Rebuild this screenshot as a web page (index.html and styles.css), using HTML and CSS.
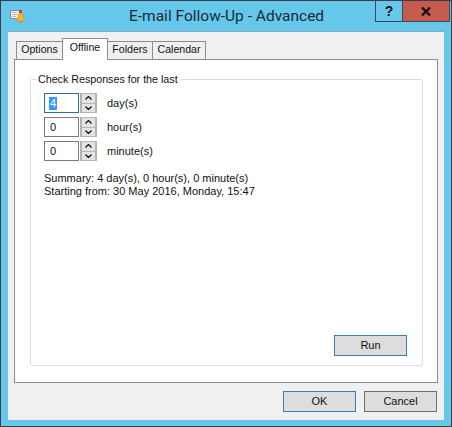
FILE: index.html
```html
<!DOCTYPE html>
<html lang="en">
<head>
<meta charset="utf-8">
<title>E-mail Follow-Up - Advanced</title>
<link rel="stylesheet" href="styles.css">
</head>
<body>
<div class="window">
  <header class="titlebar">
    <svg class="appicon" width="16" height="16" viewBox="0 0 16 16">
      <rect x="0.5" y="1.5" width="11" height="8" fill="#f4f4f8" stroke="#8b8b98"/>
      <path d="M2 3.500h5M2 5.500h5M2 7.500h4" stroke="#b9b9c6"/>
      <rect x="9" y="1" width="3" height="3" fill="#e03030"/>
      <path d="M10.500 4c-2 0-2.500 1.500-2.500 3.500 0 1.500-1 2.500-1.500 3v1.500h8v-1.500c-.5-.5-1.500-1.500-1.500-3 0-2-.5-3.500-2.500-3.500z" fill="#f2b630" stroke="#c98a18" stroke-width=".6"/>
      <rect x="9.500" y="12.500" width="2" height="1.500" fill="#c98a18"/>
    </svg>
    <h1 class="title">E-mail Follow-Up - Advanced</h1>
    <div class="caption">
      <span class="cap-btn help">?</span>
      <span class="cap-btn close">
        <svg width="10" height="9" viewBox="0 0 10 9"><path d="M1 .5l8 8M9 .5l-8 8" stroke="#111" stroke-width="2.200" fill="none"/></svg>
      </span>
    </div>
  </header>
  <main class="client">
    <nav class="tabs">
      <span class="tab tab-options">Options</span>
      <span class="tab tab-active">Offline</span>
      <span class="tab tab-folders">Folders</span>
      <span class="tab tab-calendar">Calendar</span>
    </nav>
    <section class="panel">
      <fieldset class="group">
        <legend class="legend">Check Responses for the last</legend>
        <div class="spin-row">
          <div class="input focus"><span class="sel">4</span></div>
          <div class="updown"><span class="arrow"><svg width="7" height="4" viewBox="0 0 7 4"><path d="M.5 3.500l3-3 3 3" stroke="#111" stroke-width="1.300" fill="none"/></svg></span><span class="arrow"><svg width="7" height="4" viewBox="0 0 7 4"><path d="M.5 .5l3 3 3-3" stroke="#111" stroke-width="1.300" fill="none"/></svg></span></div>
          <span class="unit">day(s)</span>
        </div>
        <div class="spin-row">
          <div class="input">0</div>
          <div class="updown"><span class="arrow"><svg width="7" height="4" viewBox="0 0 7 4"><path d="M.5 3.500l3-3 3 3" stroke="#111" stroke-width="1.300" fill="none"/></svg></span><span class="arrow"><svg width="7" height="4" viewBox="0 0 7 4"><path d="M.5 .5l3 3 3-3" stroke="#111" stroke-width="1.300" fill="none"/></svg></span></div>
          <span class="unit">hour(s)</span>
        </div>
        <div class="spin-row">
          <div class="input">0</div>
          <div class="updown"><span class="arrow"><svg width="7" height="4" viewBox="0 0 7 4"><path d="M.5 3.500l3-3 3 3" stroke="#111" stroke-width="1.300" fill="none"/></svg></span><span class="arrow"><svg width="7" height="4" viewBox="0 0 7 4"><path d="M.5 .5l3 3 3-3" stroke="#111" stroke-width="1.300" fill="none"/></svg></span></div>
          <span class="unit">minute(s)</span>
        </div>
        <p class="summary">Summary: 4 day(s), 0 hour(s), 0 minute(s)<br>Starting from: 30 May 2016, Monday, 15:47</p>
        <div class="run-row"><button class="btn btn-default">Run</button></div>
      </fieldset>
    </section>
    <footer class="actions">
      <button class="btn btn-default">OK</button>
      <button class="btn">Cancel</button>
    </footer>
  </main>
</div>
</body>
</html>
```

FILE: styles.css
```css
* { box-sizing: border-box; }
html, body { margin: 0; padding: 0; }
body { width: 452px; height: 427px; font: 11px/13px "Liberation Sans", Arial, sans-serif; color: #111; overflow: hidden; }
.window { width: 452px; height: 427px; display: flex; flex-direction: column; background: #65c8ea; border: 1px solid #3a3f45; padding: 0 7px 6px; }
.titlebar { height: 30px; flex: none; display: flex; align-items: flex-start; margin-right: -6px; }
.appicon { margin: 8px 0 0 2px; flex: none; }
.title { flex: 1; margin: 5px 0 0 103px; padding: 0; font: 400 15.5px/20px Roboto, sans-serif; color: #1b2a3a; white-space: nowrap; }
.caption { display: flex; flex: none; height: 21px; border: 1px solid #3a4a56; border-top: 0; }
.cap-btn { display: flex; align-items: center; justify-content: center; height: 20px; }
.help { width: 27px; border-right: 1px solid #3a4a56; font: 700 14px/16px "Liberation Sans", sans-serif; color: #111; }
.close { width: 46px; background: #c55a4f; }
.client { flex: 1; display: flex; flex-direction: column; background: #f0f0f0; border-top: 1px solid #7fa8c4; padding: 6px 6px 0; }
.tabs { display: flex; height: 21px; flex: none; padding-left: 2px; align-items: flex-end; position: relative; z-index: 1; font-size: 10.6px; }
.tab { height: 18px; border: 1px solid #8b8b94; border-bottom: 0; background: #f0f0f0; padding-top: 1px; text-align: center; margin-right: -1px; }
.tab-options { width: 47px; }
.tab-folders { width: 46px; }
.tab-calendar { width: 54px; }
.tab-active { width: 46px; height: 22px; background: #fff; padding-top: 2px; margin-bottom: -1px; position: relative; z-index: 2; }
.panel { height: 324px; flex: none; background: #fff; border: 1px solid #8b8b94; padding: 13px 14px 16px 15px; }
.group { height: 100%; margin: 0; border: 1px solid #d5dfe5; border-radius: 2px; padding: 7px 15px 9px 13px; display: flex; flex-direction: column; min-width: 0; }
.legend { padding: 0 3px 0 2px; margin-left: -8px; line-height: 13px; font-size: 10.7px; }
.spin-row { display: flex; align-items: center; height: 20px; margin-bottom: 4px; }
.input { width: 35px; height: 20px; border: 1px solid #7a7a7a; padding: 3px 0 0 5px; background: #fff; }
.input.focus { border-color: #2b6f9f; }
.sel { background: #3399ff; color: #fff; display: inline-block; height: 13px; padding: 0 1px; margin-left: -1px; }
.updown { width: 17px; height: 20px; margin-left: 1px; display: flex; flex-direction: column; gap: 1px; background: #b4b4b4; padding: 1px 2px; }
.arrow { flex: 1; display: flex; align-items: center; justify-content: center; background: #e4e4e4; }
.unit { margin-left: 10px; }
.summary { margin: 7px 0 0; }
.run-row { margin-top: auto; display: flex; justify-content: flex-end; }
.btn { width: 73px; height: 21px; padding: 0; background: #dddddd; border: 1px solid #707070; font: inherit; color: #111; }
.btn-default { border-color: #3c7fb1; }
.actions { display: flex; justify-content: flex-end; gap: 8px; padding: 8px 1px 0 0; }
```
